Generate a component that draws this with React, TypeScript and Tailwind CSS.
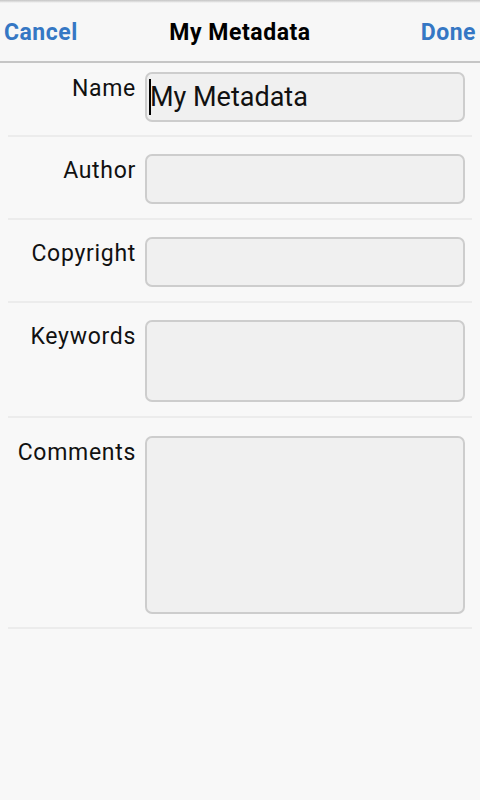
import React from "react";

const rows: { label: string; h: string; pt: string; pb: string; value?: string }[] = [
  { label: "Name", h: "h-[50px]", pt: "pt-[9px]", pb: "pb-[13px]", value: "My Metadata" },
  { label: "Author", h: "h-[50px]", pt: "pt-[17px]", pb: "pb-[14px]" },
  { label: "Copyright", h: "h-[50px]", pt: "pt-[17px]", pb: "pb-[14px]" },
  { label: "Keywords", h: "h-[82px]", pt: "pt-[17px]", pb: "pb-[14px]" },
  { label: "Comments", h: "h-[178px]", pt: "pt-[18px]", pb: "pb-[13px]" },
];

export default function App() {
  return (
    <div
      className="w-[480px] h-[800px] bg-[#f8f8f8] overflow-hidden"
      style={{ fontFamily: 'Roboto, "Noto Sans", sans-serif' }}
    >
      <div className="h-[63px] border-b-2 border-[#c6c6c6] bg-[#f7f7f7]">
        <div className="h-[3px] bg-gradient-to-b from-[#c4c4c4] to-[#f7f7f7]" />
        <div className="h-[58px] grid grid-cols-[1fr_auto_1fr] items-center px-[4px]">
          <span className="text-[23px] font-bold text-[#3577c4] leading-none tracking-[0.5px]">Cancel</span>
          <span className="text-[23px] font-bold text-black leading-none tracking-[0.55px]">My Metadata</span>
          <span className="text-[23px] font-bold text-[#3577c4] leading-none text-right tracking-[0.5px]">Done</span>
        </div>
      </div>
      {rows.map((r) => (
        <div key={r.label} className="mx-[8px]">
          <div className={`flex ${r.pt} ${r.pb}`}>
            <div className="w-[128px] text-right text-[23px] leading-[34px] tracking-[0.7px] text-[#111]">{r.label}</div>
            <div
              className={`ml-[9px] w-[320px] ${r.h} border-2 border-[#cdcdcd] rounded-[7px] bg-[#f0f0f0] flex items-center pl-[2px]`}
            >
              {r.value && (
                <>
                  <span className="w-[2px] h-[36px] bg-black" />
                  <span className="text-[27px] text-[#111] leading-none -ml-[1px]">{r.value}</span>
                </>
              )}
            </div>
          </div>
          <div className="h-[2px] bg-[#ececec]" />
        </div>
      ))}
    </div>
  );
}
